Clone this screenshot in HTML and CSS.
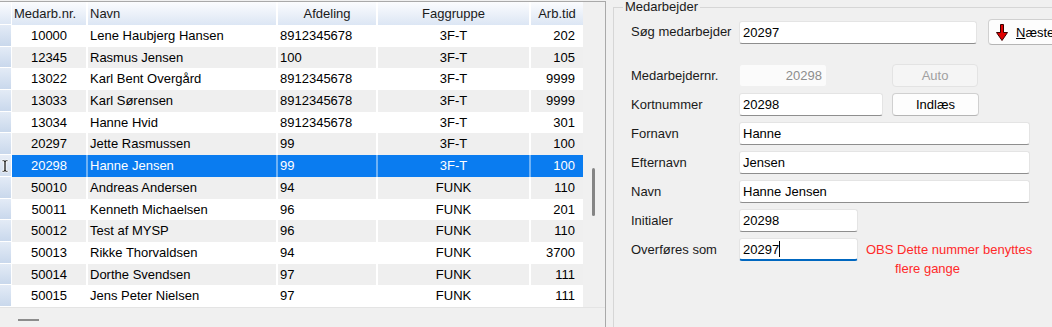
FILE: index.html
```html
<!DOCTYPE html>
<html lang="da">
<head>
    <meta charset="UTF-8">
    <title>Medarbejdere</title>
    <link rel="stylesheet" href="styles.css">
</head>
<body>

<div class="app">
    <div class="list-pane">
        <div class="grid-wrap">
            <div class="grid">
                <div class="row head">
                    <div class="c ind"></div>
                    <div class="c nr">Medarb.nr.</div>
                    <div class="c navn">Navn</div>
                    <div class="c afd">Afdeling</div>
                    <div class="c fag">Faggruppe</div>
                    <div class="c tid">Arb.tid</div>
                </div>
                <div class="row">
                    <div class="c ind"></div><div class="c nr">10000</div><div class="c navn">Lene Haubjerg Hansen</div><div class="c afd">8912345678</div><div class="c fag">3F-T</div><div class="c tid">202</div>
                </div>
                <div class="row alt">
                    <div class="c ind"></div><div class="c nr">12345</div><div class="c navn">Rasmus Jensen</div><div class="c afd">100</div><div class="c fag">3F-T</div><div class="c tid">105</div>
                </div>
                <div class="row">
                    <div class="c ind"></div><div class="c nr">13022</div><div class="c navn">Karl Bent Overgård</div><div class="c afd">8912345678</div><div class="c fag">3F-T</div><div class="c tid">9999</div>
                </div>
                <div class="row alt">
                    <div class="c ind"></div><div class="c nr">13033</div><div class="c navn">Karl Sørensen</div><div class="c afd">8912345678</div><div class="c fag">3F-T</div><div class="c tid">9999</div>
                </div>
                <div class="row">
                    <div class="c ind"></div><div class="c nr">13034</div><div class="c navn">Hanne Hvid</div><div class="c afd">8912345678</div><div class="c fag">3F-T</div><div class="c tid">301</div>
                </div>
                <div class="row alt">
                    <div class="c ind"></div><div class="c nr">20297</div><div class="c navn">Jette Rasmussen</div><div class="c afd">99</div><div class="c fag">3F-T</div><div class="c tid">100</div>
                </div>
                <div class="row selected">
                    <div class="c ind">
                        <svg class="ibeam" width="8" height="14" viewBox="0 0 8 14">
                            <path d="M1 1h2.5l0.5 0.6 0.5-0.6H7v1.6H5v8.8h2V13H4.5L4 12.4 3.5 13H1v-1.6h2V2.6H1z" fill="#000" stroke="#fff" stroke-width="0.8"/>
                        </svg>
                    </div><div class="c nr">20298</div><div class="c navn">Hanne Jensen</div><div class="c afd">99</div><div class="c fag">3F-T</div><div class="c tid">100</div>
                </div>
                <div class="row alt">
                    <div class="c ind"></div><div class="c nr">50010</div><div class="c navn">Andreas Andersen</div><div class="c afd">94</div><div class="c fag">FUNK</div><div class="c tid">110</div>
                </div>
                <div class="row">
                    <div class="c ind"></div><div class="c nr">50011</div><div class="c navn">Kenneth Michaelsen</div><div class="c afd">96</div><div class="c fag">FUNK</div><div class="c tid">201</div>
                </div>
                <div class="row alt">
                    <div class="c ind"></div><div class="c nr">50012</div><div class="c navn">Test af MYSP</div><div class="c afd">96</div><div class="c fag">FUNK</div><div class="c tid">110</div>
                </div>
                <div class="row">
                    <div class="c ind"></div><div class="c nr">50013</div><div class="c navn">Rikke Thorvaldsen</div><div class="c afd">94</div><div class="c fag">FUNK</div><div class="c tid">3700</div>
                </div>
                <div class="row alt">
                    <div class="c ind"></div><div class="c nr">50014</div><div class="c navn">Dorthe Svendsen</div><div class="c afd">97</div><div class="c fag">FUNK</div><div class="c tid">111</div>
                </div>
                <div class="row">
                    <div class="c ind"></div><div class="c nr">50015</div><div class="c navn">Jens Peter Nielsen</div><div class="c afd">97</div><div class="c fag">FUNK</div><div class="c tid">111</div>
                </div>
            </div>
            <div class="vscroll"><div class="thumb"></div></div>
        </div>
        <div class="hscroll"><span class="dash"></span></div>
    </div>

    <div class="form-pane">
        <fieldset class="group">
            <legend>Medarbejder</legend>

            <div class="frow first">
                <label>Søg medarbejder</label>
                <div class="field w-search">20297</div>
                <button class="btn next">
                    <svg width="12" height="17" viewBox="0 0 12 17">
                        <path d="M4.5 0.5h3v8h4L6 16.5 0.5 8.5h4z" fill="#e00000" stroke="#3a0000" stroke-width="1"/>
                    </svg>
                    <span><u>N</u>æste</span>
                </button>
            </div>

            <div class="frow gap">
                <label>Medarbejdernr.</label>
                <div class="field disabled w-nr">20298</div>
                <button class="btn disabled b-auto">Auto</button>
            </div>

            <div class="frow">
                <label>Kortnummer</label>
                <div class="field w-kort">20298</div>
                <button class="btn b-load">Indlæs</button>
            </div>

            <div class="frow">
                <label>Fornavn</label>
                <div class="field w-wide">Hanne</div>
            </div>

            <div class="frow">
                <label>Efternavn</label>
                <div class="field w-wide">Jensen</div>
            </div>

            <div class="frow">
                <label>Navn</label>
                <div class="field w-wide">Hanne Jensen</div>
            </div>

            <div class="frow">
                <label>Initialer</label>
                <div class="field w-short">20298</div>
            </div>

            <div class="frow top">
                <label>Overføres som</label>
                <div class="field focus w-short">20297<span class="caret"></span></div>
                <div class="note">
                    <span>OBS Dette nummer benyttes</span>
                    <span class="second">flere gange</span>
                </div>
            </div>
        </fieldset>
    </div>
</div>

</body>
</html>
```

FILE: styles.css
```css
html, body {
    margin: 0;
    height: 100%;
    overflow: hidden;
}
body {
    background-color: #f0f0f0;
    color: #000;
    font-family: "Liberation Sans", Arial, sans-serif;
    font-size: 13px;
}
.app {
    display: flex;
    height: 327px;
}

/* ---- list ---- */
.list-pane {
    width: 605px;
    margin-top: 1px;
    border-top: 1px solid #a9a9a9;
    border-right: 1px solid #a9a9a9;
    display: flex;
    flex-direction: column;
    flex-shrink: 0;
}
.grid-wrap {
    display: flex;
    height: 305px;
}
.grid {
    width: 583px;
    background-color: #fff;
}
.row {
    display: flex;
    height: 21.7px;
    line-height: 22.7px;
}
.row.head {
    height: 23px;
    line-height: 23px;
}
.row.alt {
    background-color: #efefef;
}
.row.selected {
    background-color: #0a7cf0;
    color: #fff;
}
.c {
    box-sizing: border-box;
    border-right: 2px solid #fff;
    white-space: nowrap;
    overflow: hidden;
    padding: 0 2px;
}
.row.selected .c {
    border-right-color: #6fb2f6;
}
.ind {
    width: 12px;
    padding: 0;
    border-right: 1px solid #fff;
    border-bottom: 1px solid #fff;
    background: linear-gradient(#e3ebf6, #c9d8ec);
    position: relative;
}
.row.selected .ind {
    border-right-color: #fff;
    background: linear-gradient(#e8eef7, #d3dfef);
}
.ibeam {
    position: absolute;
    left: 1px;
    top: 4px;
}
.nr {
    width: 76px;
    text-align: center;
}
.navn {
    width: 190px;
}
.afd {
    width: 100px;
}
.fag {
    width: 153px;
    text-align: center;
}
.tid {
    width: 52px;
    text-align: right;
    padding-right: 8px;
    border-right: 0;
}
.head .c {
    background: linear-gradient(#fbfcfe, #dce6f4);
    color: #1a1a1a;
}
.head .nr {
    text-align: left;
}
.head .afd,
.head .tid {
    text-align: center;
    padding-right: 2px;
}
.vscroll {
    width: 22px;
    display: flex;
    flex-direction: column;
}
.thumb {
    margin-top: 166px;
    margin-left: 9px;
    width: 3px;
    height: 48px;
    background-color: #858585;
    border-radius: 2px;
}
.hscroll {
    border-top: 1px solid #e4e4e4;
    padding-left: 18px;
}
.dash {
    display: block;
    margin-top: 11px;
    width: 21px;
    height: 2px;
    background-color: #8c8c8c;
}

/* ---- form ---- */
.form-pane {
    flex: 1;
    overflow: hidden;
}
.group {
    margin: 0 0 0 7px;
    width: 480px;
    height: 340px;
    box-sizing: border-box;
    border: 1px solid #d6d6d6;
    padding: 5px 0 0 17px;
}
.group legend {
    margin-left: -8px;
    padding: 0 2px;
    line-height: 14px;
    color: #1a1a1a;
}
.frow {
    display: flex;
    align-items: center;
    height: 23px;
    margin-bottom: 6px;
}
.frow.first {
    height: 26px;
    margin-bottom: 19px;
}
.frow.top {
    align-items: flex-start;
}
.frow label {
    width: 108px;
    flex-shrink: 0;
    color: #1a1a1a;
    line-height: 24px;
}
.field {
    box-sizing: border-box;
    height: 23px;
    line-height: 21px;
    padding: 0 3px;
    background-color: #fff;
    border: 1px solid #e4e4e4;
    border-bottom-color: #8e8e8e;
    border-radius: 3px;
    white-space: nowrap;
}
.field.disabled {
    background-color: #fbfbfb;
    border-color: #f0f0f0;
    color: #8d8d8d;
    text-align: right;
    padding-right: 4px;
}
.field.focus {
    border-bottom: 2px solid #0067c0;
}
.caret {
    display: inline-block;
    width: 1px;
    height: 16px;
    background-color: #000;
    vertical-align: -3px;
}
.w-search { width: 238px; }
.w-nr { width: 88px; }
.w-kort { width: 144px; }
.w-wide { width: 291px; }
.w-short { width: 119px; }

.btn {
    box-sizing: border-box;
    height: 23px;
    font-family: inherit;
    font-size: 13px;
    color: #000;
    background-color: #fdfdfd;
    border: 1px solid #d0d0d0;
    border-bottom-color: #b5b5b5;
    border-radius: 4px;
    padding: 0;
}
.btn.disabled {
    background-color: #f5f5f5;
    border-color: #e3e3e3;
    color: #a0a0a0;
}
.next {
    margin-left: 11px;
    width: 90px;
    height: 26px;
    display: flex;
    align-items: center;
    gap: 8px;
    padding-left: 7px;
}
.next svg {
    flex-shrink: 0;
}
.b-auto {
    margin-left: 65px;
    width: 86px;
}
.b-load {
    margin-left: 9px;
    width: 87px;
}
.note {
    margin-left: 8px;
    margin-top: 2px;
    line-height: 19px;
    color: #ff2a2a;
    white-space: nowrap;
}
.note span {
    display: block;
}
.note .second {
    padding-left: 29px;
}
```
